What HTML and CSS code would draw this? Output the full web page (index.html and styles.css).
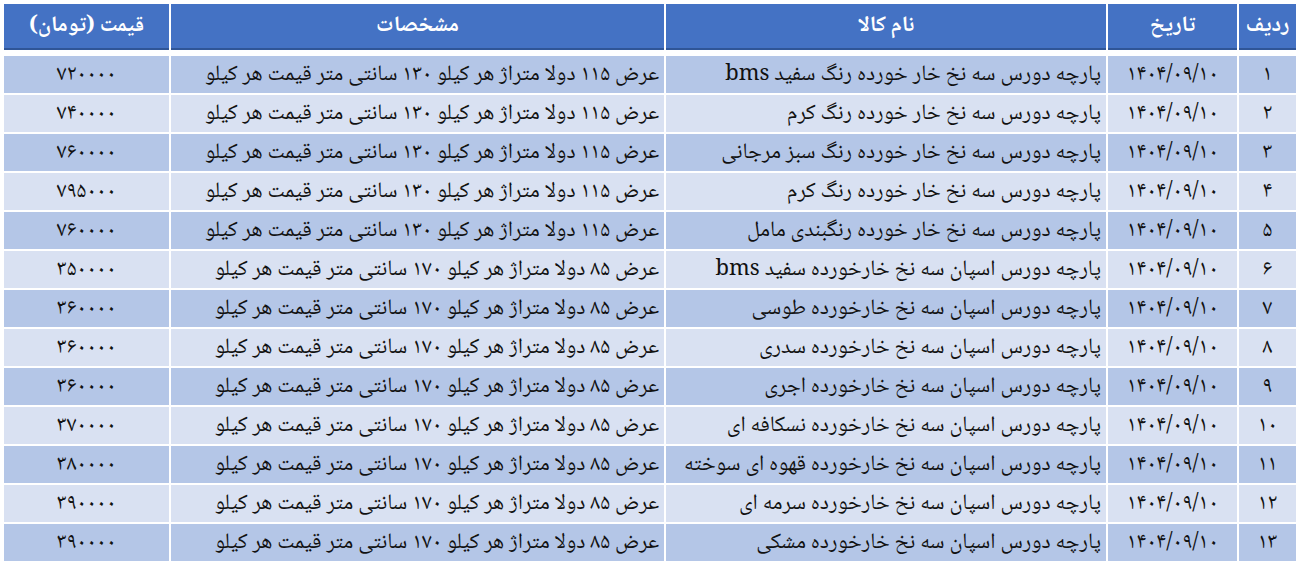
FILE: index.html
```html
<!DOCTYPE html>
<html lang="fa" dir="rtl">
<head>
<meta charset="utf-8">
<link rel="stylesheet" href="styles.css">
</head>
<body>
<div class="table">
  <div class="row head">
    <div class="cell c">ردیف</div>
    <div class="cell c">تاریخ</div>
    <div class="cell c">نام کالا</div>
    <div class="cell c">مشخصات</div>
    <div class="cell c">قیمت (تومان)</div>
  </div>
  <div class="body">
    <div class="row dark"><div class="cell c">۱</div><div class="cell c num">۱۴۰۴/۰۹/۱۰</div><div class="cell">پارچه دورس سه نخ خار خورده رنگ سفید bms</div><div class="cell">عرض ۱۱۵ دولا متراژ هر کیلو ۱۳۰ سانتی متر قیمت هر کیلو</div><div class="cell c num">۷۲۰۰۰۰</div></div>
    <div class="row light"><div class="cell c">۲</div><div class="cell c num">۱۴۰۴/۰۹/۱۰</div><div class="cell">پارچه دورس سه نخ خار خورده رنگ کرم</div><div class="cell">عرض ۱۱۵ دولا متراژ هر کیلو ۱۳۰ سانتی متر قیمت هر کیلو</div><div class="cell c num">۷۴۰۰۰۰</div></div>
    <div class="row dark"><div class="cell c">۳</div><div class="cell c num">۱۴۰۴/۰۹/۱۰</div><div class="cell">پارچه دورس سه نخ خار خورده رنگ سبز مرجانی</div><div class="cell">عرض ۱۱۵ دولا متراژ هر کیلو ۱۳۰ سانتی متر قیمت هر کیلو</div><div class="cell c num">۷۶۰۰۰۰</div></div>
    <div class="row light"><div class="cell c">۴</div><div class="cell c num">۱۴۰۴/۰۹/۱۰</div><div class="cell">پارچه دورس سه نخ خار خورده رنگ کرم</div><div class="cell">عرض ۱۱۵ دولا متراژ هر کیلو ۱۳۰ سانتی متر قیمت هر کیلو</div><div class="cell c num">۷۹۵۰۰۰</div></div>
    <div class="row dark"><div class="cell c">۵</div><div class="cell c num">۱۴۰۴/۰۹/۱۰</div><div class="cell">پارچه دورس سه نخ خار خورده رنگبندی مامل</div><div class="cell">عرض ۱۱۵ دولا متراژ هر کیلو ۱۳۰ سانتی متر قیمت هر کیلو</div><div class="cell c num">۷۶۰۰۰۰</div></div>
    <div class="row light"><div class="cell c">۶</div><div class="cell c num">۱۴۰۴/۰۹/۱۰</div><div class="cell">پارچه دورس اسپان سه نخ خارخورده سفید bms</div><div class="cell">عرض ۸۵ دولا متراژ هر کیلو ۱۷۰ سانتی متر قیمت هر کیلو</div><div class="cell c num">۳۵۰۰۰۰</div></div>
    <div class="row dark"><div class="cell c">۷</div><div class="cell c num">۱۴۰۴/۰۹/۱۰</div><div class="cell">پارچه دورس اسپان سه نخ خارخورده طوسی</div><div class="cell">عرض ۸۵ دولا متراژ هر کیلو ۱۷۰ سانتی متر قیمت هر کیلو</div><div class="cell c num">۳۶۰۰۰۰</div></div>
    <div class="row light"><div class="cell c">۸</div><div class="cell c num">۱۴۰۴/۰۹/۱۰</div><div class="cell">پارچه دورس اسپان سه نخ خارخورده سدری</div><div class="cell">عرض ۸۵ دولا متراژ هر کیلو ۱۷۰ سانتی متر قیمت هر کیلو</div><div class="cell c num">۳۶۰۰۰۰</div></div>
    <div class="row dark"><div class="cell c">۹</div><div class="cell c num">۱۴۰۴/۰۹/۱۰</div><div class="cell">پارچه دورس اسپان سه نخ خارخورده اجری</div><div class="cell">عرض ۸۵ دولا متراژ هر کیلو ۱۷۰ سانتی متر قیمت هر کیلو</div><div class="cell c num">۳۶۰۰۰۰</div></div>
    <div class="row light"><div class="cell c">۱۰</div><div class="cell c num">۱۴۰۴/۰۹/۱۰</div><div class="cell">پارچه دورس اسپان سه نخ خارخورده نسکافه ای</div><div class="cell">عرض ۸۵ دولا متراژ هر کیلو ۱۷۰ سانتی متر قیمت هر کیلو</div><div class="cell c num">۳۷۰۰۰۰</div></div>
    <div class="row dark"><div class="cell c">۱۱</div><div class="cell c num">۱۴۰۴/۰۹/۱۰</div><div class="cell">پارچه دورس اسپان سه نخ خارخورده قهوه ای سوخته</div><div class="cell">عرض ۸۵ دولا متراژ هر کیلو ۱۷۰ سانتی متر قیمت هر کیلو</div><div class="cell c num">۳۸۰۰۰۰</div></div>
    <div class="row light"><div class="cell c">۱۲</div><div class="cell c num">۱۴۰۴/۰۹/۱۰</div><div class="cell">پارچه دورس اسپان سه نخ خارخورده سرمه ای</div><div class="cell">عرض ۸۵ دولا متراژ هر کیلو ۱۷۰ سانتی متر قیمت هر کیلو</div><div class="cell c num">۳۹۰۰۰۰</div></div>
    <div class="row dark"><div class="cell c">۱۳</div><div class="cell c num">۱۴۰۴/۰۹/۱۰</div><div class="cell">پارچه دورس اسپان سه نخ خارخورده مشکی</div><div class="cell">عرض ۸۵ دولا متراژ هر کیلو ۱۷۰ سانتی متر قیمت هر کیلو</div><div class="cell c num">۳۹۰۰۰۰</div></div>
  </div>
</div>
</body>
</html>
```
FILE: styles.css
```css
html, body {
  margin: 0;
  padding: 0;
  background: #ffffff;
}
body {
  direction: rtl;
  font-family: "Noto Naskh Arabic", "Noto Sans Arabic", "DejaVu Sans", sans-serif;
  color: #111111;
}
.table {
  width: 1292px;
  margin: 4px 4px 0 4px;
  display: flex;
  flex-direction: column;
}
.row {
  display: grid;
  grid-template-columns: 57px 129px 440px 493px 165px;
  column-gap: 2px;
}
.body {
  display: flex;
  flex-direction: column;
  gap: 2px;
  margin-top: 6px;
}
.cell {
  height: 37px;
  display: flex;
  align-items: center;
  padding: 0 5px;
  font-size: 22px;
  font-weight: 300;
  white-space: nowrap;
  overflow: hidden;
}
.cell.c {
  justify-content: center;
  padding: 0;
}
.cell.num {
  letter-spacing: 2px;
}
.head .cell {
  height: 44px;
  background: #4472c4;
  border-bottom: 2px solid #2f5597;
  color: #ffffff;
  font-weight: bold;
  font-size: 22px;
  letter-spacing: 0;
}
.dark .cell {
  background: #b4c6e7;
}
.light .cell {
  background: #d9e1f2;
}
```
